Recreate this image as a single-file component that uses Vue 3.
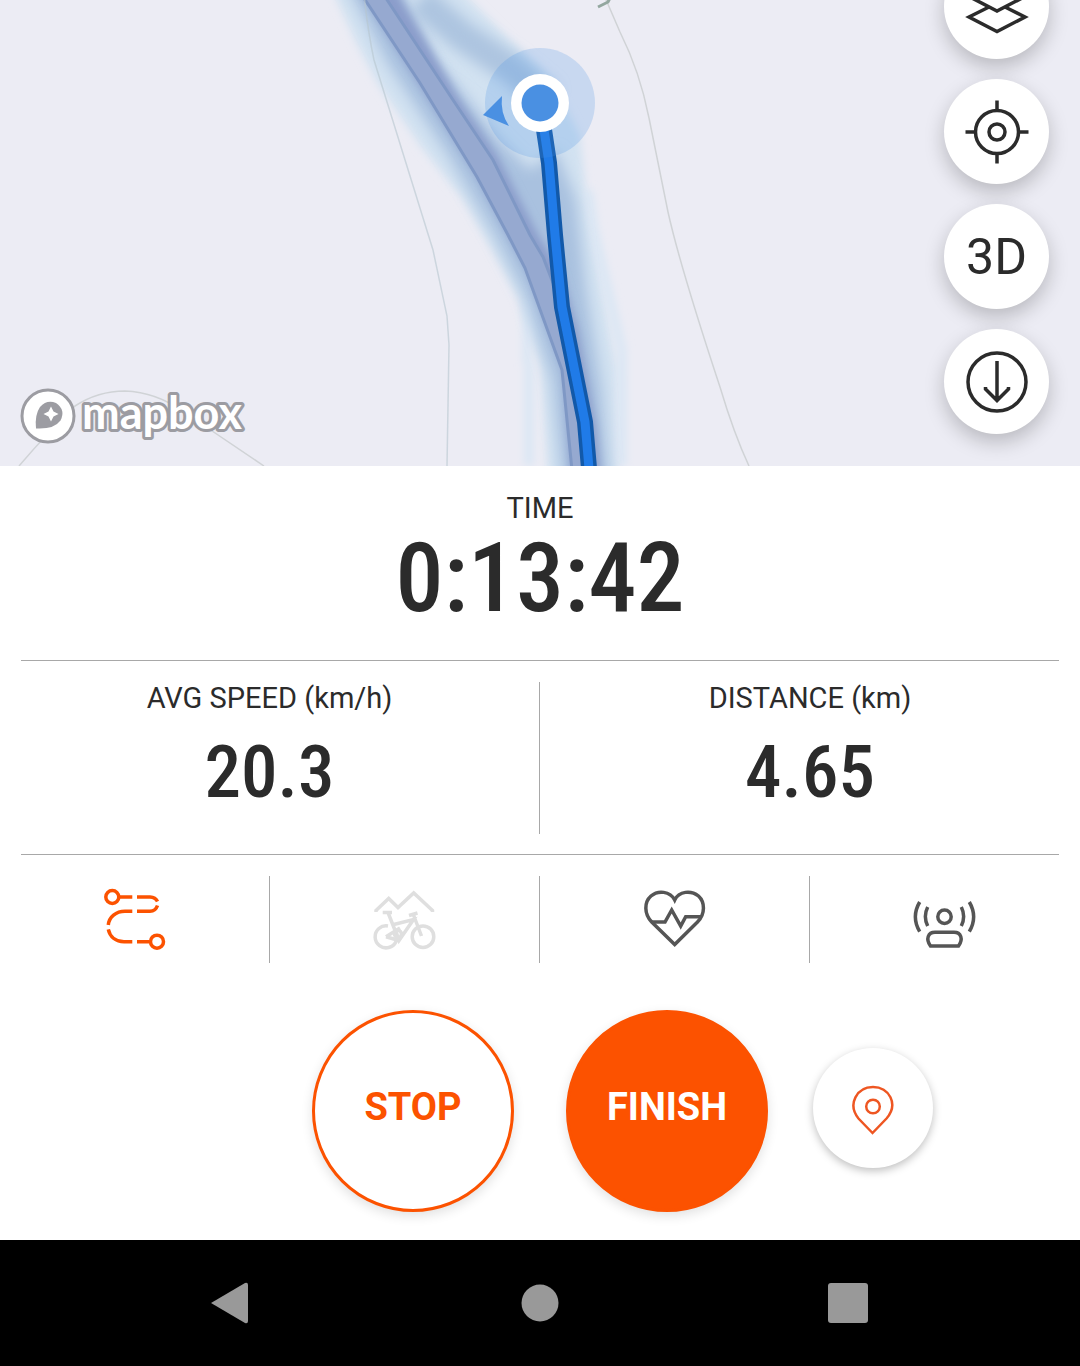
<template>
  <div class="record-page">
    <!-- Map -->
    <section class="map" aria-label="Map">
      <svg class="map-canvas" viewBox="0 0 1080 466" preserveAspectRatio="xMidYMax slice">
        <defs>
          <filter id="soft" x="-20%" y="-20%" width="140%" height="140%">
            <feGaussianBlur stdDeviation="4" />
          </filter>
          <filter id="softer" x="-20%" y="-20%" width="140%" height="140%">
            <feGaussianBlur stdDeviation="7" />
          </filter>
        </defs>

        <!-- contour lines -->
        <g fill="none" stroke="#d0d3d6" stroke-width="1.5">
          <path d="M604 -5L620 32Q640 72 649 118L668 212Q680 266 720 387Q734 434 749 466" />
          <path d="M19 466Q48 432 75 406Q98 391 125 391Q156 392 184 412L264 466" />
        </g>
        <path d="M598 7L608 2L611 -4" fill="none" stroke="#93a79f" stroke-width="3" />

        <!-- heatmap -->
        <path
          d="M328 -20L356 42L378 84L422 148L462 198L488 243L518 298L540 366L549 490H618L617 370L601 282L588 212L580 135L550 78L504 34L450 -20Z"
          fill="#d2e2f1"
          filter="url(#soft)"
        />
        <path d="M527 300V364M529 364V466M588 190L594 230L608 290L622 350V466" fill="none" stroke="#d8e6f4" stroke-width="8" filter="url(#soft)" />
        <path
          d="M344 -20L388 64L448 155L494 235L524 294L552 380L563 490H610L602 390L586 290L576 200L556 150L530 170L500 140L436 60L396 -20Z"
          fill="#a9c1df"
          filter="url(#softer)"
        />
        <path d="M420 0L462 36L510 68L548 100" fill="none" stroke="#adc5e0" stroke-width="30" filter="url(#softer)" />
        <path
          d="M354 -20L414 75L476 173L509 235L528 270L564 370L572 490H602L596 425L578 330L560 270L538 235L497 155L458 97L390 -20Z"
          fill="#8b9dcb"
          filter="url(#soft)"
        />
        <path
          d="M352 -20L420 83L477 177L508 235L525 268L562 370L572 470H594L570 330L543 257L530 235L493 160L453 100L374 -20Z"
          fill="#96a9d0"
        />
        <path
          d="M352 -20L420 83L477 177L508 235L525 268L562 370L572 470M374 -20L453 100L493 160L530 235L543 257L553 283"
          fill="none"
          stroke="#7f98c5"
          stroke-width="3"
        />
        <path d="M364 -5Q368 32 374 60L433 250L447 316L449 345L447 466" fill="none" stroke="#b8c6cf" stroke-opacity="0.6" stroke-width="1.5" />

        <!-- recorded route -->
        <path :d="routePath" fill="none" stroke="#1259a9" stroke-width="16" stroke-linejoin="round" />
        <path :d="routePath" fill="none" stroke="#207be8" stroke-width="9" stroke-linejoin="round" />

        <!-- current position -->
        <circle cx="540" cy="103" r="55" fill="#4a90e2" fill-opacity="0.22" />
        <path d="M483 115L502 96Q500 113 509 126Z" fill="#4a90e2" />
        <circle cx="540" cy="103" r="29" fill="#fff" />
        <circle cx="540" cy="103" r="18.5" fill="#4a90e2" />
      </svg>

      <a class="mapbox" href="#">
        <svg class="mapbox-mark" viewBox="0 0 56 56">
          <circle cx="28" cy="28" r="26" fill="#fff" stroke="#9c9ca2" stroke-width="3" />
          <path d="M16 40.500Q14.500 27 20 19Q27 11 36 15Q46 22 40.500 32.500Q34 41.500 16 40.500Z" fill="#9c9ca2" />
          <path d="M31 18.500L33.500 23.500L38.500 26L33.500 28.500L31 33.500L28.500 28.500L23.500 26L28.500 23.500Z" fill="#fff" />
        </svg>
        <svg class="mapbox-name" viewBox="0 0 168 56">
          <text x="6" y="41">mapbox</text>
        </svg>
      </a>

      <div class="map-controls">
        <button class="map-button" aria-label="Layers">
          <svg viewBox="0 0 64 64">
            <path d="M32 6L61 21L32 36L3 21Z" />
            <path d="M24 32L4 42L32 56.500L60 42L40 32" />
          </svg>
        </button>
        <button class="map-button" aria-label="Locate">
          <svg viewBox="0 0 64 64">
            <circle cx="32" cy="32" r="21.500" />
            <circle cx="32" cy="32" r="8" />
            <path d="M32 0.500V10M32 54V63.500M0.500 32H10M54 32H63.500" />
          </svg>
        </button>
        <button class="map-button">3D</button>
        <button class="map-button" aria-label="Download">
          <svg viewBox="0 0 64 64">
            <circle cx="32" cy="32" r="29" />
            <path d="M32 11V51M20.500 37V39L32 50.500L43.500 39V37" />
          </svg>
        </button>
      </div>
    </section>

    <!-- Stats -->
    <section class="stats">
      <div class="stat stat-time">
        <span class="stat-label">TIME</span>
        <span class="stat-value">{{ time }}</span>
      </div>
      <hr class="divider" />
      <div class="stat-row">
        <div v-for="stat in stats" :key="stat.label" class="stat">
          <span class="stat-label">{{ stat.label }}</span>
          <span class="stat-value">{{ stat.value }}</span>
        </div>
      </div>
      <hr class="divider" />
    </section>

    <!-- Shortcuts -->
    <div class="shortcuts">
      <button class="shortcut active" aria-label="Route">
        <svg viewBox="0 0 64 64">
          <circle cx="9.300" cy="9" r="6.500" />
          <circle cx="54" cy="53.700" r="6.500" />
          <path d="M17 9H29.300M34 9H47Q52.500 9.300 54.500 13.500M54.500 17.500Q52.500 23.300 47 23.300H34M29.300 23.300H22C13 23.300 6 29 5.300 37M5.300 41.300C7 49 13 53.700 21 53.700H29.300M34 53.700H46" />
        </svg>
      </button>
      <button class="shortcut disabled" aria-label="Sport" disabled>
        <svg viewBox="0 0 64 64">
          <path d="M3 24V22.500L15.700 10.500L25 19.500L40.700 5L59.500 22.500V24" />
          <path d="M23 44A11 11 0 1 1 15 38" />
          <circle cx="50" cy="48.700" r="10.800" />
          <path d="M9.700 24.500H19M15 24.500L26 52.500L40.500 31.500L18.700 37M36 27.500L44.500 25M40.500 27L48.500 48M13 48.700L27 40M13 48.700L26 52.500" />
          <circle cx="25" cy="46" r="3.500" />
        </svg>
      </button>
      <button class="shortcut" aria-label="Heart rate">
        <svg viewBox="0 0 64 64">
          <path d="M31.700 12C27 3 15 2 8 8C1 14 1 26 8.700 34L31.700 56.500L54.500 34C62.500 26 62 14 55.500 8C48 2 36 3 31.700 12Z" />
          <path d="M8.700 34H22L28.700 22L37.700 38L42.700 28.700H58" />
        </svg>
      </button>
      <button class="shortcut" aria-label="Beacon">
        <svg viewBox="0 0 64 64">
          <circle cx="31.500" cy="28.700" r="6.700" />
          <path d="M17.500 58H45.500C50.500 51 48 44.300 41 44.300H22C15 44.300 12.500 51 17.500 58Z" />
          <path d="M14.700 19Q10 28.500 14.700 38M6.700 14Q-2 28.800 6.700 43.700M48.300 19Q53 28.500 48.300 38M56.300 14Q65 28.800 56.300 43.700" />
        </svg>
      </button>
    </div>

    <!-- Recording actions -->
    <div class="actions">
      <div class="main-actions">
        <button class="action-button stop">STOP</button>
        <button class="action-button finish">FINISH</button>
      </div>
      <button class="pin-button" aria-label="Add pin">
        <svg viewBox="0 0 48 56">
          <path d="M23.500 53L9.500 38.500C-2 24 8 7 24 7C40 7 50 24 37.500 38.500Z" />
          <circle cx="24" cy="26.500" r="6.800" />
        </svg>
      </button>
    </div>

    <!-- System navigation -->
    <nav class="system-nav">
      <button aria-label="Back">
        <svg viewBox="0 0 44 44"><path d="M2 22L36 2Q39 1 39 4V40Q39 43 36 42Z" /></svg>
      </button>
      <button aria-label="Home">
        <svg viewBox="0 0 44 44"><circle cx="22" cy="22" r="18.500" /></svg>
      </button>
      <button aria-label="Recents">
        <svg viewBox="0 0 44 44"><rect x="1" y="2" width="40" height="40" rx="3" /></svg>
      </button>
    </nav>
  </div>
</template>

<script setup>
import { ref } from 'vue'

const time = ref('0:13:42')

const stats = ref([
  { label: 'AVG SPEED (km/h)', value: '20.3' },
  { label: 'DISTANCE (km)', value: '4.65' }
])

const routePath = 'M540 103L549 163L555 235L562 307L585 422L590 480'
</script>

<style>
body {
  margin: 0;
}
</style>

<style scoped>
.record-page {
  display: flex;
  flex-direction: column;
  min-height: 100vh;
  background-color: #ffffff;
  color: #2b2b2b;
  font-family: Roboto, "Liberation Sans", sans-serif;
}

button {
  padding: 0;
  border: none;
  background: none;
  color: inherit;
  font-family: inherit;
  cursor: pointer;
}

svg {
  display: block;
}

/* Map */
.map {
  position: relative;
  flex: 1;
  min-height: 400px;
  overflow: hidden;
  background-color: #ececf4;
}

.map-canvas {
  position: absolute;
  inset: 0;
  width: 100%;
  height: 100%;
}

.mapbox {
  position: absolute;
  left: 20px;
  bottom: 22px;
  display: flex;
  align-items: center;
  text-decoration: none;
}

.mapbox-mark {
  width: 56px;
  height: 56px;
}

.mapbox-name {
  width: 168px;
  height: 56px;
  overflow: visible;
  fill: #ffffff;
  stroke: #9c9ca2;
  stroke-width: 6px;
  stroke-linejoin: round;
  paint-order: stroke fill;
  font-family: Lato, sans-serif;
  font-size: 45px;
  font-weight: 700;
}

.map-controls {
  position: absolute;
  right: 31px;
  bottom: 32px;
  display: flex;
  flex-direction: column;
  gap: 20px;
}

.map-button {
  display: flex;
  align-items: center;
  justify-content: center;
  width: 105px;
  height: 105px;
  border-radius: 50%;
  background-color: #ffffff;
  box-shadow: 0 8px 20px rgba(0, 0, 0, 0.22);
  font-size: 50px;
}

.map-button svg {
  width: 64px;
  height: 64px;
  fill: none;
  stroke: #2b2b2b;
  stroke-width: 3.5;
}

/* Stats */
.divider {
  height: 1px;
  margin: 0 21px;
  border: none;
  background-color: #a8a8a8;
}

.stat {
  display: flex;
  flex-direction: column;
  align-items: center;
}

.stat-label {
  font-size: 29px;
  line-height: 32px;
}

.stat-value {
  font-family: "Roboto Condensed", Roboto, sans-serif;
  font-weight: 500;
}

.stat-time {
  padding: 26px 0 34px;
}

.stat-time .stat-value {
  margin-top: 6px;
  font-size: 96px;
  line-height: 96px;
}

.stat-row {
  display: grid;
  grid-template-columns: 1fr 1fr;
  padding: 21px 0 20px;
}

.stat-row .stat {
  padding-bottom: 24px;
}

.stat-row .stat:first-child {
  border-right: 1px solid #a8a8a8;
}

.stat-row .stat-value {
  margin-top: 20px;
  font-size: 73px;
  line-height: 76px;
}

/* Shortcuts */
.shortcuts {
  display: grid;
  grid-template-columns: repeat(4, 1fr);
  padding: 21px 0;
}

.shortcut {
  display: flex;
  align-items: center;
  justify-content: center;
  height: 87px;
  color: #555555;
}

.shortcut:not(:last-child) {
  border-right: 1px solid #a8a8a8;
}

.shortcut.active {
  color: #fc5200;
}

.shortcut.disabled {
  color: #dfdfdf;
  cursor: default;
}

.shortcut svg {
  width: 64px;
  height: 64px;
  fill: none;
  stroke: currentColor;
  stroke-width: 3.5;
}

/* Recording actions */
.actions {
  display: grid;
  grid-template-columns: 1fr auto 1fr;
  align-items: center;
  column-gap: 45px;
  padding: 26px 0 28px;
}

.main-actions {
  display: flex;
  grid-column: 2;
  gap: 52px;
}

.action-button {
  width: 202px;
  height: 202px;
  padding-bottom: 8px;
  border: 3px solid #fc5200;
  border-radius: 50%;
  box-shadow: 0 4px 12px rgba(0, 0, 0, 0.12);
  font-size: 38px;
  font-weight: 700;
}

.stop {
  background-color: #ffffff;
  color: #fc5200;
}

.finish {
  background-color: #fc5200;
  color: #ffffff;
}

.pin-button {
  display: flex;
  align-items: center;
  justify-content: center;
  width: 120px;
  height: 120px;
  margin-bottom: 6px;
  border-radius: 50%;
  background-color: #ffffff;
  box-shadow: 0 3px 8px rgba(0, 0, 0, 0.25);
}

.pin-button svg {
  width: 48px;
  height: 56px;
  fill: none;
  stroke: #ee5622;
  stroke-width: 2.5;
}

/* System navigation */
.system-nav {
  display: grid;
  grid-template-columns: repeat(3, 1fr);
  padding: 0 76px;
  background-color: #000000;
}

.system-nav button {
  display: flex;
  align-items: center;
  justify-content: center;
  height: 126px;
}

.system-nav svg {
  width: 44px;
  height: 44px;
  fill: #999999;
}
</style>
